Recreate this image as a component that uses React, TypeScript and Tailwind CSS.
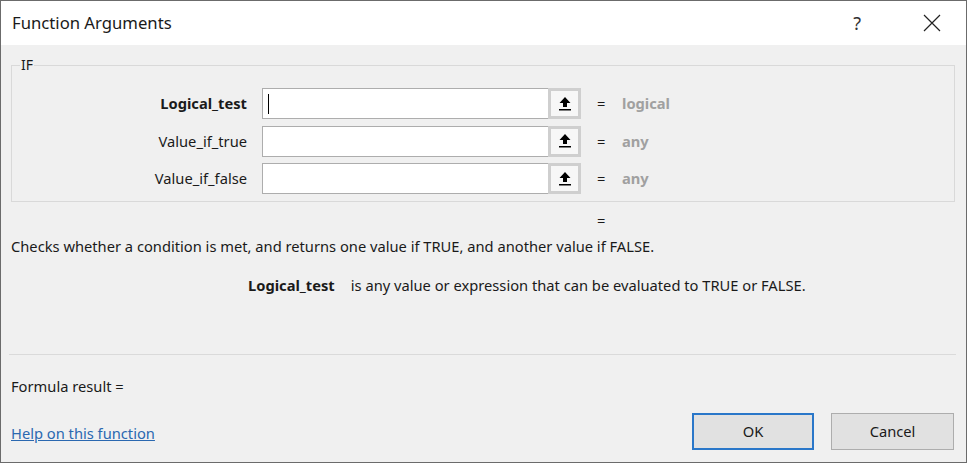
import React from "react";

function UpBtn() {
  return (
    <div className="w-[33px] h-[31px] bg-[#cfcfcf] p-[3px] flex">
      <div className="flex-1 bg-[#f7f7f7] flex items-center justify-center">
        <svg width="14" height="16" viewBox="0 0 14 16">
          <path d="M7 1 L12.5 7 L9 7 L9 11 L5 11 L5 7 L1.5 7 Z" fill="#000" />
          <rect x="1" y="13" width="12" height="1.5" fill="#000" />
        </svg>
      </div>
    </div>
  );
}

function Row({ label, bold, value, cursor }: { label: string; bold?: boolean; value: string; cursor?: boolean }) {
  return (
    <div className="flex items-center h-[31px]">
      <div className={`w-[227px] text-right text-[14.7px] text-[#1a1a1a] ${bold ? "font-bold" : ""}`}>{label}</div>
      <div className="ml-[15px] w-[286px] h-[31px] bg-white border border-[#adadad] border-r-0 flex items-center pl-[5px]">
        {cursor && <div className="w-[1px] h-[20px] bg-black" />}
      </div>
      <UpBtn />
      <div className="ml-[16px] w-[10px] text-[14.7px] text-[#1a1a1a]">=</div>
      <div className="ml-[15px] text-[14.7px] font-bold text-[#a0a0a0]">{value}</div>
    </div>
  );
}

export default function App() {
  return (
    <div
      className="w-[967px] h-[463px] border border-[#6b6b6b] bg-[#f0f0f0] flex flex-col text-[#1a1a1a]"
      style={{ fontFamily: '"Noto Sans", "Open Sans", sans-serif' }}
    >
      <div className="h-[44px] bg-white flex items-center pl-[11px] pr-[25px]">
        <div className="text-[16.7px] flex-1">Function Arguments</div>
        <div className="text-[18px] text-[#333] mr-[62px]">?</div>
        <svg width="18" height="18" viewBox="0 0 18 18">
          <path d="M1 1 L17 17 M17 1 L1 17" stroke="#222" strokeWidth="1.2" />
        </svg>
      </div>
      <div className="flex-1 flex flex-col px-[10px]">
        <fieldset className="mt-[12px] w-[944px] h-[145px] border border-[#d9d9d9] px-[8px] pt-[15px] flex flex-col gap-[6.5px] min-w-0">
          <legend className="px-[1px] text-[14px] leading-[16px] text-[#1a1a1a]">IF</legend>
          <Row label="Logical_test" bold value="logical" cursor />
          <Row label="Value_if_true" value="any" />
          <Row label="Value_if_false" value="any" />
        </fieldset>
        <div className="ml-[586px] mt-[8px] text-[14.7px] leading-[20px]">=</div>
        <div className="mt-[6px] text-[14.7px] leading-[20px]">
          Checks whether a condition is met, and returns one value if TRUE, and another value if FALSE.
        </div>
        <div className="mt-[19px] ml-[237px] text-[14.7px] leading-[20px] flex">
          <span className="font-bold">Logical_test</span>
          <span className="ml-[16px]">is any value or expression that can be evaluated to TRUE or FALSE.</span>
        </div>
        <div className="mt-[59px] h-px bg-[#dadada] mx-[-2px] w-[947px]" />
        <div className="mt-[21px] text-[14.7px] leading-[20px]">Formula result =</div>
        <div className="flex items-center mt-[17px]">
          <a className="text-[14.7px] leading-[20px] text-[#2a68b0] underline flex-1 mt-[3px]">Help on this function</a>
          <button className="w-[122px] h-[37px] border-2 border-[#2a77c9] bg-[#e1e1e1] text-[14.7px] mr-[17px]">OK</button>
          <button className="w-[123px] h-[37px] border border-[#adadad] bg-[#e1e1e1] text-[14.7px] mr-[2px]">Cancel</button>
        </div>
      </div>
    </div>
  );
}
